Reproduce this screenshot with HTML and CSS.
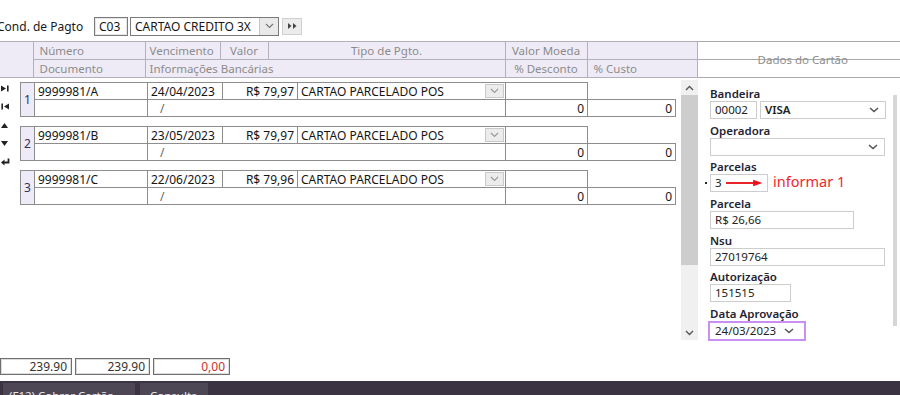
FILE: index.html
```html
<!DOCTYPE html>
<html lang="pt-BR">
<head>
<meta charset="UTF-8" />
<meta name="viewport" content="width=device-width, initial-scale=1" />
<title>Condição de Pagamento - Cartão</title>
<link rel="stylesheet" href="styles.css">
</head>
<body>

<!-- Condicao de pagamento -->
<div class="top-bar">
  <span class="top-label">Cond. de Pagto</span>
  <div class="code-box">C03</div>
  <div class="combo">
    <span class="combo-text">CARTAO CREDITO 3X</span>
    <span class="combo-btn">
      <svg width="9" height="6" viewBox="0 0 9 6"><polyline points="1,1 4.5,4.5 8,1" fill="none" stroke="#777" stroke-width="1.2"/></svg>
    </span>
  </div>
  <div class="skip-btn">
    <svg width="9" height="6" viewBox="0 0 9 6"><polygon points="0,0 3.5,3 0,6" fill="#444"/><polygon points="5,0 8.5,3 5,6" fill="#444"/></svg>
  </div>
</div>

<!-- Cabecalho da grade -->
<div class="grid-head">
  <table class="head-table">
    <colgroup>
      <col style="width:33px"><col style="width:112px"><col style="width:75px"><col style="width:48px"><col style="width:237px"><col style="width:82px"><col style="width:110px">
    </colgroup>
    <tr>
      <td rowspan="2" class="stub"></td>
      <td class="pl">Número</td>
      <td>Vencimento</td>
      <td class="c">Valor</td>
      <td class="c">Tipo de Pgto.</td>
      <td class="c">Valor Moeda</td>
      <td></td>
    </tr>
    <tr>
      <td class="pl">Documento</td>
      <td colspan="3">Informações Bancárias</td>
      <td class="c">% Desconto</td>
      <td class="pl">% Custo</td>
    </tr>
  </table>
  <div class="card-head">Dados do Cartão</div>
</div>

<div class="main">
  <div class="row-nav">
    <span class="nav-ico"><svg width="8" height="7" viewBox="0 0 8 7"><polygon points="0,0.5 5,3.5 0,6.5" fill="#222"/><rect x="6" y="0.5" width="1.6" height="6" fill="#222"/></svg></span>
    <span class="nav-ico"><svg width="8" height="7" viewBox="0 0 8 7"><rect x="0.4" y="0.5" width="1.6" height="6" fill="#222"/><polygon points="8,0.5 3,3.5 8,6.5" fill="#222"/></svg></span>
    <span class="nav-ico"><svg width="7" height="5" viewBox="0 0 7 5"><polygon points="3.5,0 7,5 0,5" fill="#222"/></svg></span>
    <span class="nav-ico"><svg width="7" height="5" viewBox="0 0 7 5"><polygon points="0,0 7,0 3.5,5" fill="#222"/></svg></span>
    <span class="nav-ico"><svg width="9" height="8" viewBox="0 0 9 8"><path d="M7.5 0.5 V4.5 H2.5" fill="none" stroke="#222" stroke-width="1.8"/><polygon points="0,4.5 3.5,1.5 3.5,7.5" fill="#222"/></svg></span>
  </div>

  <div class="entries">
    <table class="entry">
      <colgroup>
        <col style="width:14px"><col style="width:113px"><col style="width:75px"><col style="width:75px"><col style="width:208px"><col style="width:82px"><col style="width:88px">
      </colgroup>
      <tr>
        <td rowspan="2" class="num">1</td>
        <td>9999981/A</td>
        <td>24/04/2023</td>
        <td class="r">R$ 79,97</td>
        <td class="tipo"><div class="tipo-in"><span>CARTAO PARCELADO POS</span><span class="drop"><svg width="9" height="6" viewBox="0 0 9 6"><polyline points="1,1 4.5,4.5 8,1" fill="none" stroke="#999" stroke-width="1.1"/></svg></span></div></td>
        <td></td>
        <td class="blank"></td>
      </tr>
      <tr>
        <td></td>
        <td colspan="3" class="bank">/</td>
        <td class="r">0</td>
        <td class="r">0</td>
      </tr>
    </table>

    <table class="entry">
      <colgroup>
        <col style="width:14px"><col style="width:113px"><col style="width:75px"><col style="width:75px"><col style="width:208px"><col style="width:82px"><col style="width:88px">
      </colgroup>
      <tr>
        <td rowspan="2" class="num">2</td>
        <td>9999981/B</td>
        <td>23/05/2023</td>
        <td class="r">R$ 79,97</td>
        <td class="tipo"><div class="tipo-in"><span>CARTAO PARCELADO POS</span><span class="drop"><svg width="9" height="6" viewBox="0 0 9 6"><polyline points="1,1 4.5,4.5 8,1" fill="none" stroke="#999" stroke-width="1.1"/></svg></span></div></td>
        <td></td>
        <td class="blank"></td>
      </tr>
      <tr>
        <td></td>
        <td colspan="3" class="bank">/</td>
        <td class="r">0</td>
        <td class="r">0</td>
      </tr>
    </table>

    <table class="entry">
      <colgroup>
        <col style="width:14px"><col style="width:113px"><col style="width:75px"><col style="width:75px"><col style="width:208px"><col style="width:82px"><col style="width:88px">
      </colgroup>
      <tr>
        <td rowspan="2" class="num">3</td>
        <td>9999981/C</td>
        <td>22/06/2023</td>
        <td class="r">R$ 79,96</td>
        <td class="tipo"><div class="tipo-in"><span>CARTAO PARCELADO POS</span><span class="drop"><svg width="9" height="6" viewBox="0 0 9 6"><polyline points="1,1 4.5,4.5 8,1" fill="none" stroke="#999" stroke-width="1.1"/></svg></span></div></td>
        <td></td>
        <td class="blank"></td>
      </tr>
      <tr>
        <td></td>
        <td colspan="3" class="bank">/</td>
        <td class="r">0</td>
        <td class="r">0</td>
      </tr>
    </table>
  </div>

  <div class="vscroll">
    <span class="vs-arrow"><svg width="9" height="6" viewBox="0 0 9 6"><polyline points="1,5 4.5,1.5 8,5" fill="none" stroke="#555" stroke-width="1.4"/></svg></span>
    <div class="vs-thumb"></div>
    <div class="vs-track"></div>
    <span class="vs-arrow"><svg width="9" height="6" viewBox="0 0 9 6"><polyline points="1,1 4.5,4.5 8,1" fill="none" stroke="#555" stroke-width="1.4"/></svg></span>
  </div>

  <!-- Dados do cartao -->
  <div class="card">
    <div class="card-body">
      <div class="fld">
        <label>Bandeira</label>
        <div class="fld-row">
          <div class="inp w47">00002</div>
          <div class="inp sel w126"><span class="bold">VISA</span><svg width="10" height="6" viewBox="0 0 10 6"><polyline points="1,1 5,4.6 9,1" fill="none" stroke="#555" stroke-width="1.5"/></svg></div>
        </div>
      </div>
      <div class="fld">
        <label>Operadora</label>
        <div class="inp sel w175"><span></span><svg width="10" height="6" viewBox="0 0 10 6"><polyline points="1,1 5,4.6 9,1" fill="none" stroke="#555" stroke-width="1.5"/></svg></div>
      </div>
      <div class="fld">
        <label>Parcelas</label>
        <div class="fld-row">
          <span class="dot"></span>
          <div class="inp w58 parc">3<svg class="arrow" width="40" height="8" viewBox="0 0 40 8"><line x1="0" y1="4" x2="31" y2="4" stroke="#e8141b" stroke-width="2"/><polygon points="29,0.5 39,4 29,7.5" fill="#e8141b"/></svg></div>
          <span class="hint">informar 1</span>
        </div>
      </div>
      <div class="fld">
        <label>Parcela</label>
        <div class="inp w144">R$ 26,66</div>
      </div>
      <div class="fld">
        <label>Nsu</label>
        <div class="inp w175">27019764</div>
      </div>
      <div class="fld">
        <label>Autorização</label>
        <div class="inp w81">151515</div>
      </div>
      <div class="fld">
        <label>Data Aprovação</label>
        <div class="inp sel date"><span>24/03/2023</span><svg width="10" height="6" viewBox="0 0 10 6"><polyline points="1,1 5,4.6 9,1" fill="none" stroke="#555" stroke-width="1.5"/></svg></div>
      </div>
    </div>
    <div class="card-rail"></div>
  </div>
</div>

<div class="totals">
  <div class="tot w72">239.90</div>
  <div class="tot w75">239.90</div>
  <div class="tot w77 neg">0,00</div>
</div>

<div class="tab-bar">
  <span class="tab t1">(F12) Cobrar Cartão</span>
  <span class="tab t2">Consulta</span>
</div>

</body>
</html>
```

FILE: styles.css
```css
  * { box-sizing: border-box; }

  body, html {
    margin: 0; padding: 0;
    background: #fff;
    font-family: "Noto Sans", "Open Sans", sans-serif;
    font-size: 12px;
    color: #151515;
  }

  body {
    width: 900px;
    height: 395px;
    overflow: hidden;
  }

  /* Topo */
  .top-bar {
    display: flex;
    align-items: center;
    height: 20px;
    margin-top: 16px;
  }

  .top-label {
    width: 97px;
    margin-left: -3px;
    color: #1a1a1a;
  }

  .code-box {
    width: 34px;
    height: 19px;
    border: 1px solid #7a7a7a;
    box-shadow: inset 0 0 0 1px #e6e6e6;
    padding: 0 4px;
    line-height: 17px;
  }

  .combo {
    display: flex;
    align-items: stretch;
    width: 149px;
    height: 19px;
    margin-left: 2px;
    border: 1px solid #7a7a7a;
  }

  .combo-text {
    flex: 1;
    padding-left: 4px;
    line-height: 17px;
  }

  .combo-btn {
    width: 19px;
    display: flex;
    align-items: center;
    justify-content: center;
    background: #e9e9e9;
    border-left: 1px solid #c4c4c4;
  }

  .skip-btn {
    width: 20px;
    height: 17px;
    margin-left: 3px;
    display: flex;
    align-items: center;
    justify-content: center;
    background: #ececec;
    border: 1px solid #d0d0d0;
  }

  /* Cabecalho */
  .grid-head {
    display: flex;
    margin-top: 5px;
  }

  .head-table {
    width: 697px;
    table-layout: fixed;
    border-collapse: collapse;
    background: #efebf6;
    color: #8b8b8b;
    font-size: 11.5px;
  }

  .head-table td {
    height: 18px;
    padding: 0 4px;
    border: 1px solid #b4b0bb;
    line-height: 16px;
    white-space: nowrap;
    overflow: hidden;
  }

  .head-table td.stub { border-left: none; }
  .head-table td.pl { padding-left: 6px; }
  .head-table td.c { text-align: center; }

  .card-head {
    width: 203px;
    height: 37px;
    border-top: 1px solid #a9a9a9;
    border-bottom: 1px solid #a9a9a9;
    display: flex;
    align-items: center;
    justify-content: center;
    padding-left: 8px;
    color: #8e8e8e;
    font-size: 11.5px;
    background: linear-gradient(#a9a9a9, #a9a9a9) center / 100% 1px no-repeat;
  }

  /* Linhas */
  .main {
    display: flex;
    height: 260px;
    margin-top: 2px;
  }

  .row-nav {
    width: 20px;
    display: flex;
    flex-direction: column;
    margin-top: -1px;
  }

  .nav-ico {
    height: 18.5px;
    display: flex;
    align-items: center;
    padding-left: 1px;
  }

  .entries {
    width: 660px;
    padding-top: 2px;
    display: flex;
    flex-direction: column;
    gap: 9px;
  }

  .entry {
    width: 655px;
    table-layout: fixed;
    border-collapse: collapse;
  }

  .entry td {
    height: 17px;
    padding: 0 3px;
    border: 1px solid #8d8d8d;
    line-height: 15px;
    white-space: nowrap;
    overflow: hidden;
  }

  .entry td.blank {
    border-top: none;
    border-right: none;
  }

  .entry td.num {
    background: #efeaf8;
    color: #2d3558;
    text-align: center;
    padding: 0;
  }

  .entry td.r { text-align: right; }
  .entry td.bank { padding-left: 12px; color: #666; }
  .entry td.tipo { padding-right: 1px; }

  .tipo-in {
    display: flex;
    align-items: center;
    justify-content: space-between;
  }

  .drop {
    width: 19px;
    height: 14px;
    display: flex;
    align-items: center;
    justify-content: center;
    background: #ececec;
    border: 1px solid #c9c9c9;
  }

  .vscroll {
    width: 17px;
    margin-left: 1px;
    background: #f0f0f0;
    display: flex;
    flex-direction: column;
  }

  .vs-arrow {
    height: 15px;
    display: flex;
    align-items: center;
    justify-content: center;
  }

  .vs-thumb {
    height: 170px;
    background: #cdcdcd;
  }

  .vs-track { flex: 1; }

  /* Dados do cartao */
  .card {
    width: 200px;
    margin-left: 2px;
    display: flex;
  }

  .card-body {
    flex: 1;
    padding: 7px 0 0 10px;
    display: flex;
    flex-direction: column;
    gap: 4.7px;
  }

  .fld label {
    display: block;
    height: 14px;
    line-height: 14px;
    font-weight: 600;
    color: #1f2433;
    font-size: 11.5px;
  }

  .fld-row {
    display: flex;
    align-items: center;
    gap: 3px;
  }

  .inp {
    height: 18px;
    border: 1px solid #cdcdcd;
    padding: 0 4px;
    line-height: 16px;
    font-size: 11.5px;
    color: #222;
  }

  .sel {
    display: flex;
    align-items: center;
    justify-content: space-between;
    padding-right: 6px;
  }

  .bold { font-weight: 600; }

  .w47 { width: 47px; }
  .w58 { width: 58px; }
  .w81 { width: 81px; }
  .w126 { width: 126px; }
  .w144 { width: 144px; }
  .w175 { width: 175px; }

  .parc {
    display: flex;
    align-items: center;
    gap: 4px;
  }

  .dot {
    width: 2px;
    height: 2px;
    background: #222;
    margin-left: -5px;
    margin-right: 0;
  }

  .hint {
    color: #f0282d;
    font-size: 14.5px;
    margin-left: 2px;
    margin-top: -4px;
  }

  .date {
    width: 98px;
    height: 20px;
    margin-left: -2px;
    border: 2px solid #c98ff2;
    padding-left: 5px;
    padding-right: 10px;
  }

  .card-rail {
    width: 4px;
    margin: 15px 3px 14px 0;
    background: #d6d6d6;
  }

  /* Totais */
  .totals {
    display: flex;
    gap: 3px;
    margin-top: 18px;
  }

  .tot {
    height: 17px;
    border: 1px solid #6f6f6f;
    box-shadow: inset 0 0 0 1px #dcdcdc;
    text-align: right;
    padding-right: 4px;
    line-height: 15px;
    color: #333;
  }

  .tot.neg { color: #c8302f; }
  .w72 { width: 72px; }
  .w75 { width: 75px; }
  .w77 { width: 77px; }

  /* Abas */
  .tab-bar {
    display: flex;
    gap: 5px;
    height: 20px;
    margin-top: 6px;
    padding: 2px 0 0 3px;
    background: #3b3341;
  }

  .tab {
    height: 18px;
    background: #4d4654;
    color: #e9e6ee;
    padding: 6px 0 0 6px;
    line-height: 14px;
    font-size: 11.5px;
    overflow: hidden;
  }

  .t1 { width: 132px; }
  .t2 { width: 68px; padding-left: 10px; }
```
